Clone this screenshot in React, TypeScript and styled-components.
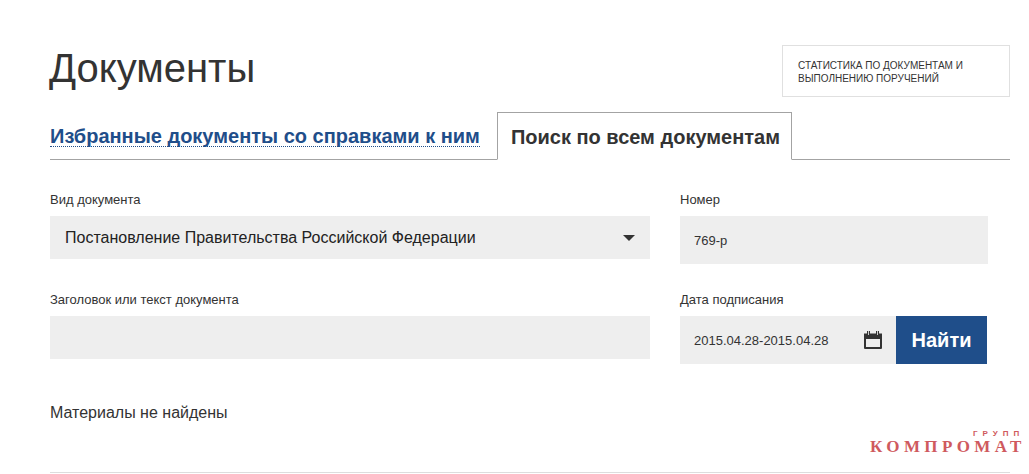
import React from "react";
import styled, { createGlobalStyle } from "styled-components";

const GlobalStyle = createGlobalStyle`
  html, body {
    margin: 0;
    padding: 0;
    background: #fff;
    overflow: hidden;
    font-family: "Liberation Sans", Arial, sans-serif;
    color: #333;
  }
`;

function App() {
  return (
    <Page>
      <GlobalStyle />
      <Header>
        <Title>Документы</Title>
        <StatsLink>СТАТИСТИКА ПО ДОКУМЕНТАМ И ВЫПОЛНЕНИЮ ПОРУЧЕНИЙ</StatsLink>
      </Header>

      <Tabs>
        <TabLink>Избранные документы со справками к ним</TabLink>
        <ActiveTab>Поиск по всем документам</ActiveTab>
      </Tabs>

      <Form>
        <Field>
          <Label>Вид документа</Label>
          <Select>
            <span>Постановление Правительства Российской Федерации</span>
            <Arrow />
          </Select>
        </Field>
        <Field>
          <Label>Номер</Label>
          <NumberInput>769-р</NumberInput>
        </Field>
        <Field>
          <Label>Заголовок или текст документа</Label>
          <TextInput />
        </Field>
        <Field>
          <Label>Дата подписания</Label>
          <DateRow>
            <DateInput>
              <span>2015.04.28-2015.04.28</span>
              <CalendarIcon />
            </DateInput>
            <SearchButton>Найти</SearchButton>
          </DateRow>
        </Field>
      </Form>

      <Empty>Материалы не найдены</Empty>
      <Watermark>
        <small>ГРУПП</small>
        КОМПРОМАТ
      </Watermark>
      <BottomLine />
    </Page>
  );
}

function CalendarIcon() {
  return (
    <svg width="18" height="18" viewBox="0 0 18 18">
      <path
        fill="#333"
        d="M0 2.5h3V0h3v2.5h6V0h3v2.5h3V17a1 1 0 0 1-1 1H1a1 1 0 0 1-1-1z"
      />
      <rect x="2" y="8" width="14" height="8" fill="#eee" />
      <rect x="4" y="0" width="1" height="4" fill="#ccc" />
      <rect x="13" y="0" width="1" height="4" fill="#ccc" />
    </svg>
  );
}

export default App;

const Page = styled.main`
  position: relative;
  width: 1029px;
  height: 474px;
  padding: 0 19px 0 50px;
  box-sizing: border-box;
  overflow: hidden;
`;

const Header = styled.header`
  display: flex;
  justify-content: space-between;
  align-items: flex-start;
  height: 112px;
  padding-top: 45px;
  box-sizing: border-box;
`;

const Title = styled.h1`
  margin: 0 0 0 -1px;
  font-size: 40px;
  line-height: 46px;
  font-weight: 400;
  color: #333;
`;

const StatsLink = styled.a`
  width: 228px;
  height: 52px;
  padding: 13px 15px 0;
  box-sizing: border-box;
  border: 1px solid #e0e0e0;
  font-size: 10px;
  line-height: 13px;
  color: #333;
`;

const Tabs = styled.nav`
  display: flex;
  align-items: flex-end;
  height: 48px;
  border-bottom: 1px solid #a3a3a3;
  box-sizing: border-box;
`;

const TabLink = styled.a`
  font-size: 20px;
  font-weight: 700;
  line-height: 19px;
  color: #1f4e8a;
  border-bottom: 1px dotted #1f4e8a;
  margin: 0 17px 12px 0;
  white-space: nowrap;
`;

const ActiveTab = styled.div`
  width: 295px;
  height: 48px;
  margin-bottom: -1px;
  padding: 12px 13px 0;
  box-sizing: border-box;
  border: 1px solid #a3a3a3;
  border-bottom: 1px solid #fff;
  background: #fff;
  font-size: 20px;
  font-weight: 700;
  line-height: 24px;
  color: #333;
  white-space: nowrap;
`;

const Form = styled.form`
  display: grid;
  grid-template-columns: 600px 308px;
  column-gap: 30px;
  grid-template-rows: 100px 100px;
  padding-top: 32px;
`;

const Field = styled.div`
  display: flex;
  flex-direction: column;
  align-items: flex-start;
`;

const Label = styled.label`
  font-size: 13px;
  line-height: 16px;
  height: 24px;
  color: #333;
`;

const Select = styled.div`
  display: flex;
  align-items: center;
  justify-content: space-between;
  width: 100%;
  height: 43px;
  padding: 0 15px;
  box-sizing: border-box;
  background: #eee;
  font-size: 16px;
  color: #222;
`;

const Arrow = styled.i`
  width: 0;
  height: 0;
  border-left: 6px solid transparent;
  border-right: 6px solid transparent;
  border-top: 6px solid #333;
`;

const NumberInput = styled.div`
  display: flex;
  align-items: center;
  width: 100%;
  height: 48px;
  padding: 0 14px;
  box-sizing: border-box;
  background: #eee;
  font-size: 13px;
  color: #333;
`;

const TextInput = styled.div`
  width: 100%;
  height: 43px;
  background: #eee;
`;

const DateRow = styled.div`
  display: flex;
  width: 307px;
  height: 48px;
`;

const DateInput = styled.div`
  display: flex;
  align-items: center;
  justify-content: space-between;
  width: 216px;
  padding: 0 14px;
  box-sizing: border-box;
  background: #eee;
  font-size: 13px;
  color: #333;
`;

const SearchButton = styled.button`
  width: 91px;
  border: 0;
  padding: 0;
  background: #1f4e8a;
  color: #fff;
  font-family: inherit;
  font-size: 20px;
  font-weight: 700;
`;

const Empty = styled.p`
  margin: 0;
  padding-top: 12px;
  font-size: 16px;
  line-height: 18px;
  color: #333;
`;

const Watermark = styled.div`
  position: absolute;
  left: 870px;
  top: 430px;
  width: 150px;
  padding-top: 9px;
  font-family: "Liberation Serif", serif;
  font-weight: 700;
  font-size: 17px;
  line-height: 15px;
  letter-spacing: 4.4px;
  color: #cf5a5e;
  white-space: nowrap;

  small {
    position: absolute;
    top: 0;
    left: 103px;
    font-family: "Liberation Sans", sans-serif;
    font-weight: 700;
    font-size: 8px;
    line-height: 8px;
    letter-spacing: 5px;
  }
`;

const BottomLine = styled.hr`
  position: absolute;
  left: 50px;
  top: 472px;
  width: 960px;
  margin: 0;
  border: 0;
  border-top: 1px solid #ddd;
`;
